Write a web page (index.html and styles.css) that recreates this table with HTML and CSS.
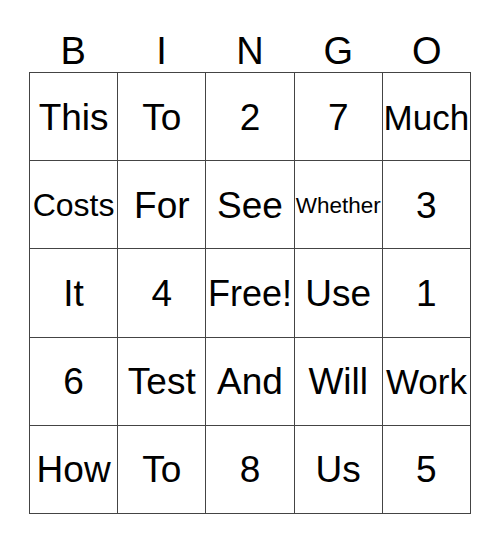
FILE: index.html
```html
<!DOCTYPE html>
<html>
<head>
<meta charset="utf-8">
<link rel="stylesheet" href="styles.css">
</head>
<body>
<div class="card">
  <div class="head">
    <div>B</div><div>I</div><div>N</div><div>G</div><div>O</div>
  </div>
  <div class="grid">
    <div class="cell">This</div>
    <div class="cell">To</div>
    <div class="cell">2</div>
    <div class="cell">7</div>
    <div class="cell s35">Much</div>
    <div class="cell s32">Costs</div>
    <div class="cell">For</div>
    <div class="cell">See</div>
    <div class="cell s22">Whether</div>
    <div class="cell">3</div>
    <div class="cell">It</div>
    <div class="cell">4</div>
    <div class="cell s36">Free!</div>
    <div class="cell">Use</div>
    <div class="cell">1</div>
    <div class="cell">6</div>
    <div class="cell">Test</div>
    <div class="cell">And</div>
    <div class="cell">Will</div>
    <div class="cell s35">Work</div>
    <div class="cell">How</div>
    <div class="cell">To</div>
    <div class="cell">8</div>
    <div class="cell">Us</div>
    <div class="cell">5</div>
  </div>
</div>
</body>
</html>
```
FILE: styles.css
```css
html, body {
  margin: 0;
  padding: 0;
  background: #fff;
}
body {
  font-family: "Liberation Sans", Arial, sans-serif;
  color: #000;
}
.card {
  width: 442px;
  margin-left: 29px;
  padding-top: 30px;
}
.head {
  display: grid;
  grid-template-columns: repeat(5, 1fr);
  height: 42px;
  font-size: 38px;
  line-height: 42px;
  text-align: center;
}
.grid {
  display: grid;
  grid-template-columns: repeat(5, 1fr);
  grid-template-rows: repeat(5, 87.2px);
  gap: 1px;
  border: 1px solid #444;
  background: #444;
}
.cell {
  background: #fff;
  display: flex;
  align-items: center;
  justify-content: center;
  padding-top: 2px;
  font-size: 37px;
  white-space: nowrap;
  overflow: hidden;
}
.s35 { font-size: 35px; }
.s32 { font-size: 32px; }
.s36 { font-size: 36px; }
.s22 { font-size: 22.5px; }
```
